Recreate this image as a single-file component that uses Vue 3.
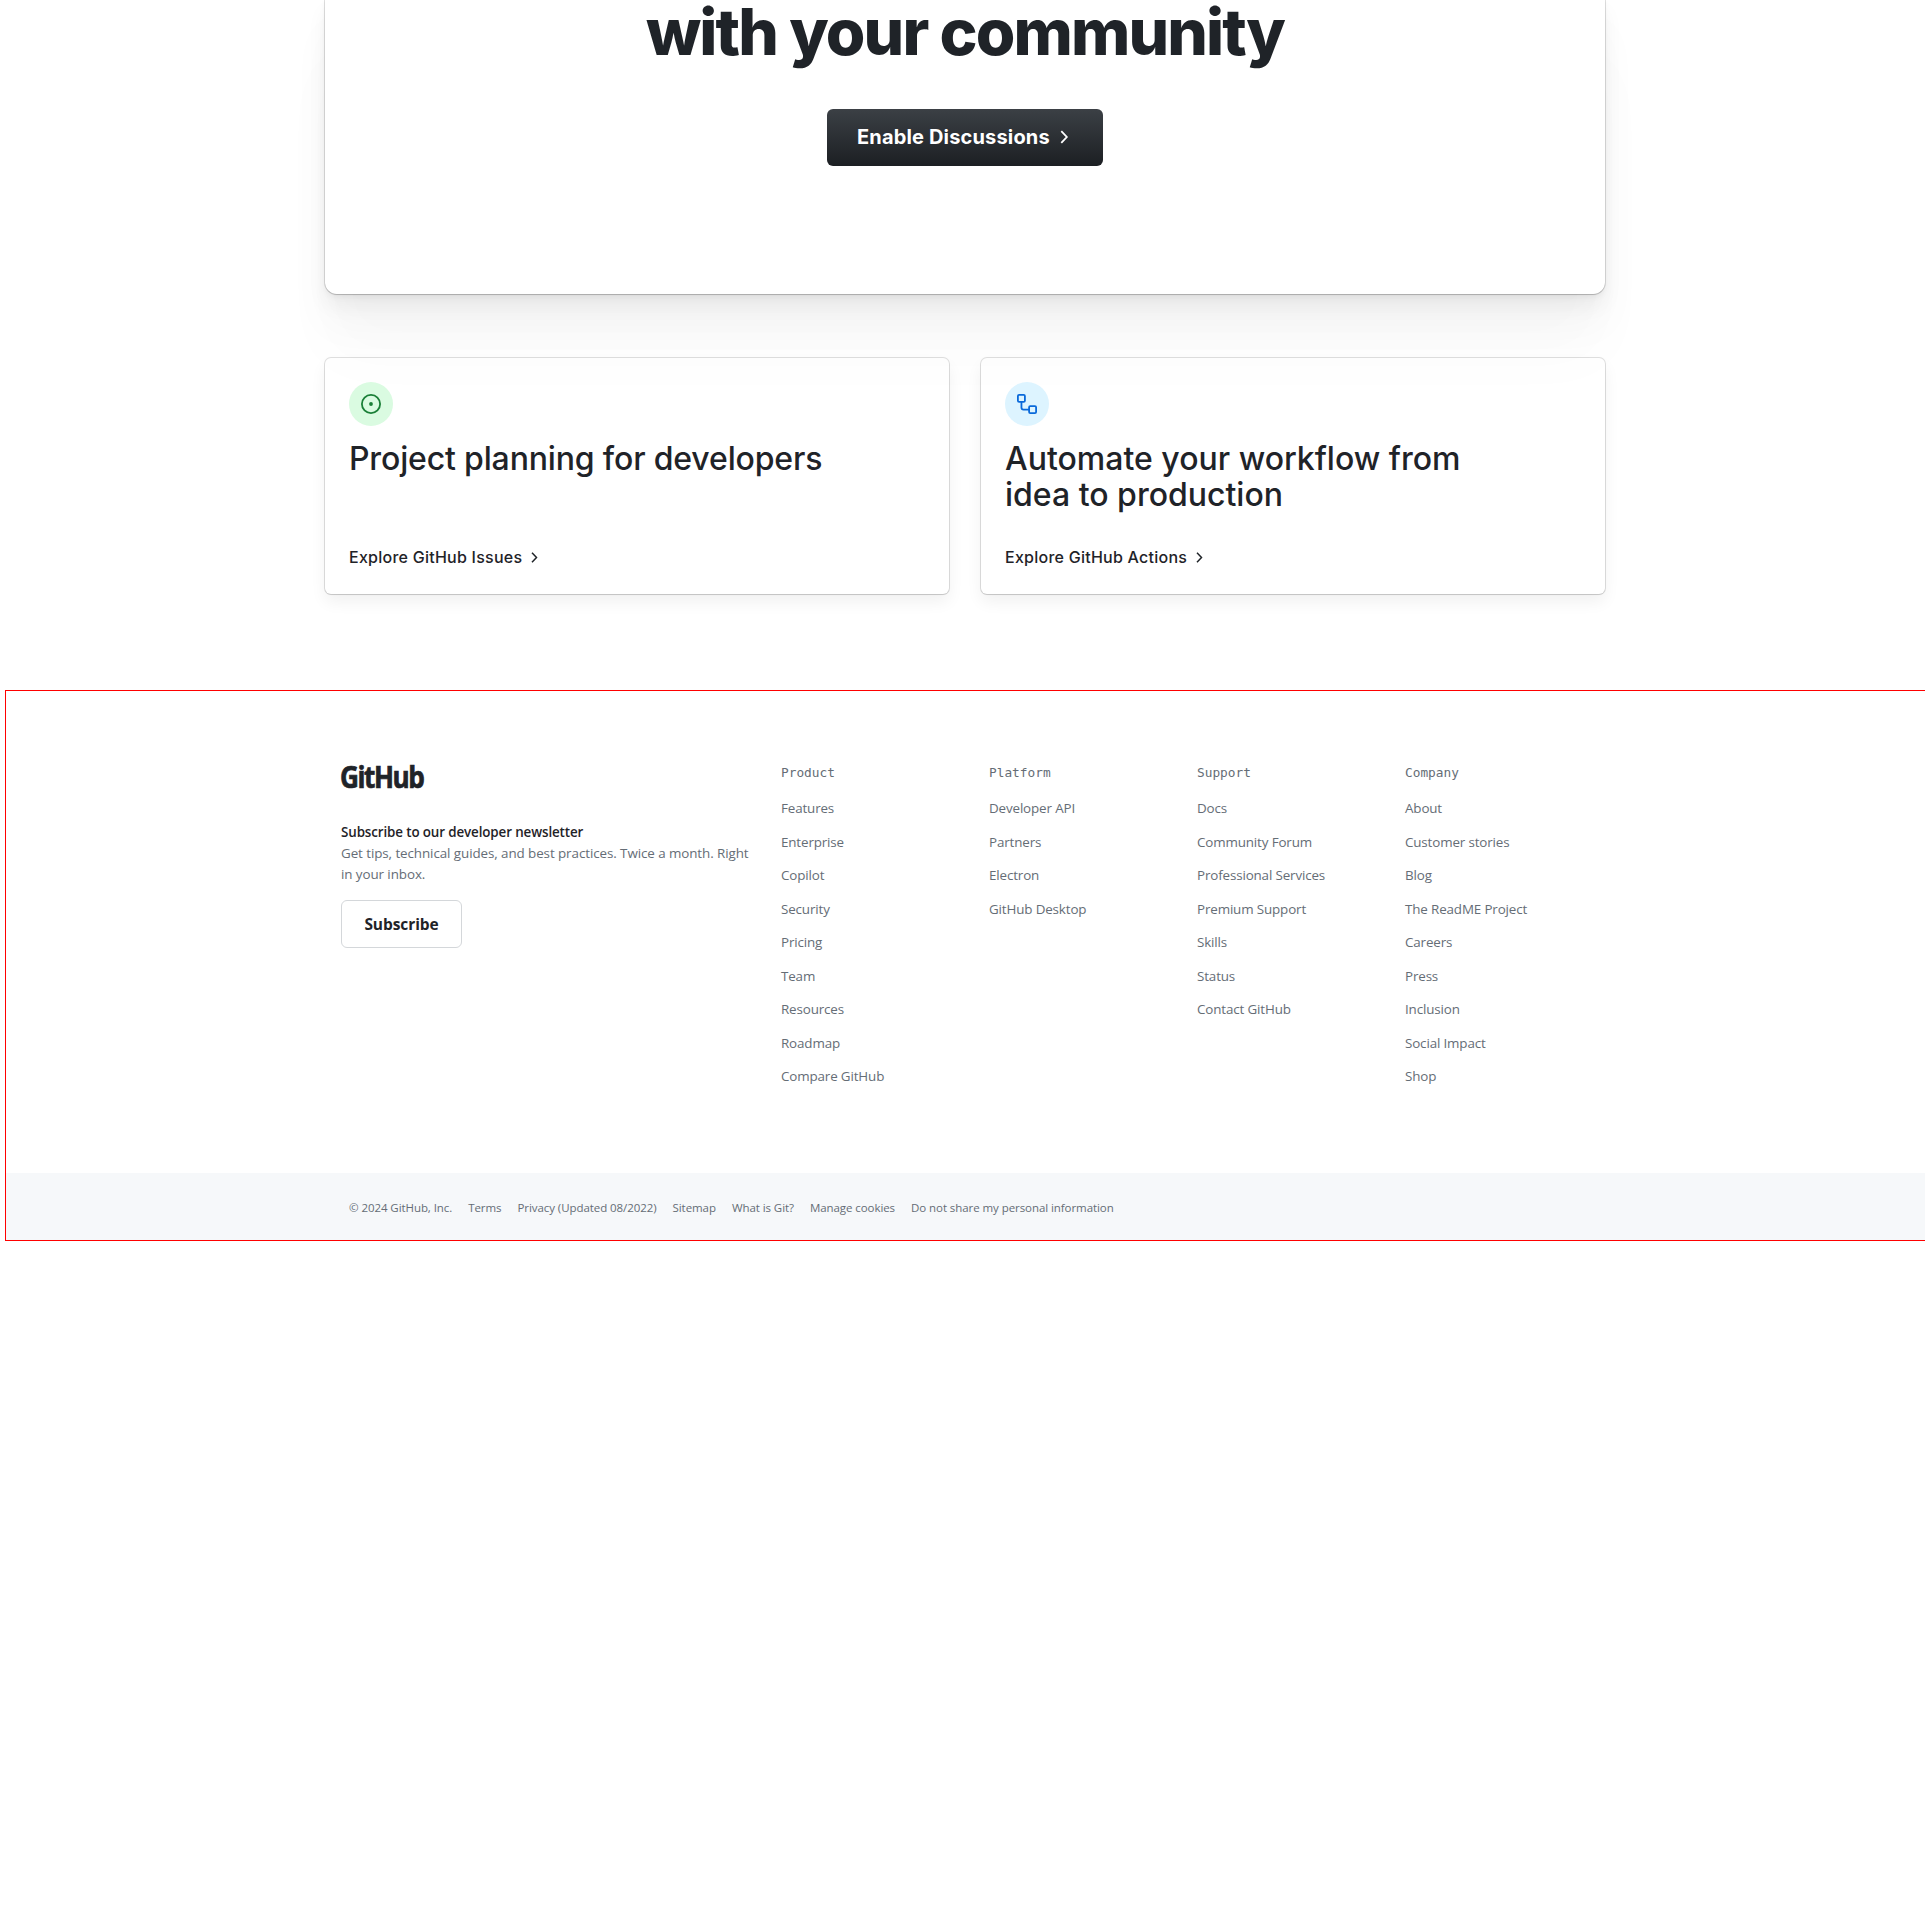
<script setup>
const columns = [
  { title: 'Product', links: ['Features', 'Enterprise', 'Copilot', 'Security', 'Pricing', 'Team', 'Resources', 'Roadmap', 'Compare GitHub'] },
  { title: 'Platform', links: ['Developer API', 'Partners', 'Electron', 'GitHub Desktop'] },
  { title: 'Support', links: ['Docs', 'Community Forum', 'Professional Services', 'Premium Support', 'Skills', 'Status', 'Contact GitHub'] },
  { title: 'Company', links: ['About', 'Customer stories', 'Blog', 'The ReadME Project', 'Careers', 'Press', 'Inclusion', 'Social Impact', 'Shop'] }
]
const legal = ['© 2024 GitHub, Inc.', 'Terms', 'Privacy (Updated 08/2022)', 'Sitemap', 'What is Git?', 'Manage cookies', 'Do not share my personal information']
</script>

<template>
  <div class="page">
    <section class="hero">
      <h1>with your community</h1>
      <a class="btn"><span>Enable Discussions</span>
        <svg width="9" height="14" viewBox="0 0 9 14"><path d="M1.3 1.2 6.8 7l-5.500 5.800" fill="none" stroke="currentColor" stroke-width="1.8" /></svg>
      </a>
    </section>
    <section class="cards">
      <article class="card">
        <div class="badge green">
          <svg width="20" height="20" viewBox="0 0 20 20"><circle cx="10" cy="10" r="9.100" fill="none" stroke="currentColor" stroke-width="1.8" /><circle cx="10" cy="10" r="1.900" fill="currentColor" /></svg>
        </div>
        <h2 class="tight">Project planning for developers</h2>
        <a class="more"><span>Explore GitHub Issues</span>
          <svg width="7" height="11" viewBox="0 0 7 11"><path d="M1 .8l4.500 4.700L1 10.200" fill="none" stroke="currentColor" stroke-width="1.5" /></svg>
        </a>
      </article>
      <article class="card">
        <div class="badge blue">
          <svg width="20" height="20" viewBox="0 0 20 20" fill="none" stroke="currentColor" stroke-width="1.800"><rect x=".9" y=".9" width="7" height="7" rx="1.200" /><rect x="12.100" y="12.100" width="7" height="7" rx="1.200" /><path d="M4.450 8v5.400q0 2.150 2.150 2.150H12" /></svg>
        </div>
        <h2>Automate your workflow from<br>idea to production</h2>
        <a class="more"><span>Explore GitHub Actions</span>
          <svg width="7" height="11" viewBox="0 0 7 11"><path d="M1 .8l4.500 4.700L1 10.200" fill="none" stroke="currentColor" stroke-width="1.5" /></svg>
        </a>
      </article>
    </section>
    <footer class="footer">
      <div class="top">
        <div class="news">
          <svg class="logo" width="86" height="26" viewBox="0 0 86 26"><text x="-1" y="25" textLength="83.500" lengthAdjust="spacingAndGlyphs">GitHub</text></svg>
          <b>Subscribe to our developer newsletter</b>
          <p>Get tips, technical guides, and best practices. Twice a month. Right<br>in your inbox.</p>
          <a class="subscribe">Subscribe</a>
        </div>
        <nav v-for="c in columns" :key="c.title" class="col">
          <h3>{{ c.title }}</h3>
          <ul><li v-for="l in c.links" :key="l"><a>{{ l }}</a></li></ul>
        </nav>
      </div>
      <div class="legal"><div class="legal-in"><span v-for="l in legal" :key="l">{{ l }}</span></div></div>
    </footer>
  </div>
</template>

<style>
body { background: #fff; }
</style>
<style scoped>
.page { width: 1920px; margin-left: 5px; height: 1930px; font-family: "Open Sans", "Noto Sans", sans-serif; color: #1f2328; }
h1, h2, h3, p, ul { margin: 0; padding: 0; }
.hero { box-sizing: border-box; width: 1280px; height: 294px; margin: 0 auto; display: flex; flex-direction: column; align-items: center; border-radius: 0 0 12px 12px;
  box-shadow: 0 0 0 1px rgba(0,0,0,.12), 0 1px 1px rgba(0,0,0,.12), 0 3px 6px rgba(0,0,0,.05), 0 12px 20px rgba(0,0,0,.05), 0 32px 40px rgba(0,0,0,.03), 0 64px 64px rgba(0,0,0,.02); }
h1 { height: 109px; font: 800 64px/64px Inter, sans-serif; letter-spacing: -1.87px; white-space: nowrap; }
.btn { box-sizing: border-box; width: 276px; height: 57px; padding: 0 0 2px 30px; display: flex; align-items: center; gap: 10px; border-radius: 6px; color: #fff; font: 700 20px/28px Inter, sans-serif; letter-spacing: .16px; background: linear-gradient(#3b4045, #1c1f23); white-space: nowrap; }
.cards { width: 1280px; margin: 64px auto 0; display: flex; gap: 32px; }
.card { box-sizing: border-box; width: 624px; height: 236px; padding: 24px; border-radius: 6px; display: flex; flex-direction: column; box-shadow: 0 0 0 1px rgba(0,0,0,.12), 0 1px 1px rgba(0,0,0,.08), 0 8px 16px rgba(0,0,0,.06); }
.badge { flex: none; width: 44px; height: 44px; border-radius: 50%; display: flex; align-items: center; justify-content: center; }
.green { background: #dafbe1; color: #1a7f37; }
.blue { background: #ddf4ff; color: #0969da; }
h2 { flex: none; margin-top: 15px; height: 104px; font: 500 32px/36px Inter, sans-serif; white-space: nowrap; }
.tight { letter-spacing: -.16px; }
.more { display: flex; align-items: center; gap: 9px; font: 500 16px/24px Inter, sans-serif; letter-spacing: .25px; }
.footer { box-sizing: border-box; width: 1920px; height: 551px; margin-top: 96px; border: 1px solid #f00; border-right: 0; }
.top { box-sizing: border-box; height: 482px; width: 1280px; margin-left: 319px; padding: 72px 16px 0; display: flex; }
.news { flex: none; width: 440px; font-size: 13.4px; line-height: 21px; letter-spacing: -.08px; }
.logo { display: block; margin-bottom: 33px; overflow: visible; }
.logo text { font: 700 29.5px "Open Sans", sans-serif; letter-spacing: -1.6px; fill: #1f2328; stroke: #1f2328; stroke-width: .7px; }
.news b { display: block; width: max-content; font-weight: 600; letter-spacing: -.12px; }
.news p { color: #656d76; width: max-content; }
.subscribe { box-sizing: border-box; margin-top: 15px; width: 121px; height: 48px; display: flex; align-items: center; justify-content: center; border: 1px solid #d4d7da; border-radius: 6px; font-size: 15.5px; font-weight: 700; }
.col { flex: none; width: 208px; color: #656d76; font-size: 13.4px; letter-spacing: -.14px; }
h3 { font: 400 12.8px/20px "DejaVu Sans Mono", monospace; letter-spacing: 0; margin-bottom: 15px; }
ul { list-style: none; }
li { height: 33.5px; line-height: 21px; white-space: nowrap; }
.legal { height: 67px; background: #f6f8fa; }
.legal-in { box-sizing: border-box; width: 1280px; margin-left: 319px; padding: 26px 24px 0; display: flex; gap: 16px; font-size: 11.5px; line-height: 18px; letter-spacing: -.07px; color: #656d76; white-space: nowrap; }
</style>
